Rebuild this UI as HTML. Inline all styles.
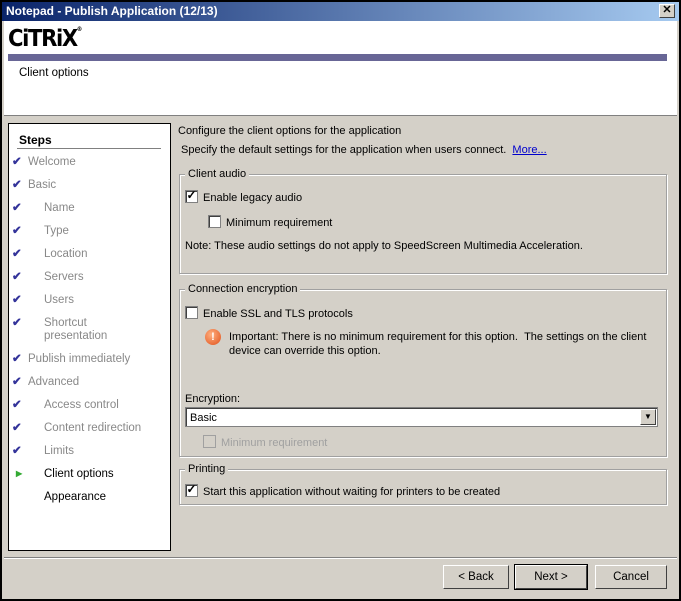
<!DOCTYPE html>
<html><head><style>
*{margin:0;padding:0;box-sizing:border-box}
body{width:681px;height:601px;background:#000;font-family:"Liberation Sans",sans-serif;font-size:11px;color:#000;position:relative;overflow:hidden}
.a{position:absolute;white-space:nowrap}
.t{padding-top:2px}
#win{position:absolute;left:2px;top:2px;width:677px;height:597px;background:#d4d0c8}
#title{position:absolute;left:2px;top:2px;width:677px;height:19px;background:linear-gradient(90deg,#0a246a,#a6caf0);color:#fff;font-weight:bold;font-size:12px;padding:2px 4px}
#close{position:absolute;left:659px;top:4px;width:16px;height:14px;background:#d4d0c8;border:1px solid;border-color:#fff #404040 #404040 #fff;font-size:11px;text-align:center;line-height:11px;font-weight:bold}
#hdr{position:absolute;left:4px;top:21px;width:673px;height:95px;background:#fff;border-bottom:1px solid #808080}
.s{position:absolute;left:12px;color:#888;font-size:11.5px;white-space:nowrap;padding-top:1px}
.s b{color:#33339a;font-weight:bold;position:absolute;left:0;top:-1px}
.gb{position:absolute;border:1px solid #a0a0a0;box-shadow:inset 1px 1px #fff,1px 1px #fff}
.gl{position:absolute;background:#d4d0c8;padding:0 3px;top:-7px;left:5px;white-space:nowrap}
.cb{position:absolute;width:13px;height:13px;background:#fff;border:1px solid #808080;box-shadow:inset 1px 1px #404040}
.btn{position:absolute;top:565px;height:24px;border:1px solid;border-color:#fff #404040 #404040 #fff;text-align:center;line-height:22px;background:#d4d0c8;font-size:11.5px}
</style></head><body>
<div id="win"></div>
<div id="title">Notepad - Publish Application (12/13)</div>
<div id="close">✕</div>
<div id="hdr">
 <div class="a" style="left:4px;top:5px;font-size:23px;font-weight:900;letter-spacing:-1.5px;font-family:'DejaVu Sans',sans-serif;transform:scaleX(0.92);transform-origin:left">CiTRiX<span style="font-size:6px;vertical-align:top">®</span></div>
 <div class="a" style="left:4px;top:33px;width:659px;height:7px;background:#686696"></div>
 <div class="a" style="left:15px;top:46px;font-size:11.5px">Client options</div>
</div>
<div class="a" style="left:8px;top:123px;width:163px;height:428px;background:#fff;border:1px solid #000">
 <div class="a" style="left:10px;top:9px;font-weight:bold;font-size:12px">Steps</div>
 <div class="a" style="left:8px;top:24px;width:144px;height:1px;background:#808080"></div>
</div>
 <div class="s" style="top:155px"><b>✔</b><span style="margin-left:16px">Welcome</span></div>
 <div class="s" style="top:178px"><b>✔</b><span style="margin-left:16px">Basic</span></div>
 <div class="s" style="top:201px"><b>✔</b><span style="margin-left:32px">Name</span></div>
 <div class="s" style="top:224px"><b>✔</b><span style="margin-left:32px">Type</span></div>
 <div class="s" style="top:247px"><b>✔</b><span style="margin-left:32px">Location</span></div>
 <div class="s" style="top:270px"><b>✔</b><span style="margin-left:32px">Servers</span></div>
 <div class="s" style="top:293px"><b>✔</b><span style="margin-left:32px">Users</span></div>
 <div class="s" style="top:316px"><b>✔</b><span style="margin-left:32px;display:inline-block;line-height:13px;vertical-align:top">Shortcut<br>presentation</span></div>
 <div class="s" style="top:352px"><b>✔</b><span style="margin-left:16px">Publish immediately</span></div>
 <div class="s" style="top:375px"><b>✔</b><span style="margin-left:16px">Advanced</span></div>
 <div class="s" style="top:398px"><b>✔</b><span style="margin-left:32px">Access control</span></div>
 <div class="s" style="top:421px"><b>✔</b><span style="margin-left:32px">Content redirection</span></div>
 <div class="s" style="top:444px"><b>✔</b><span style="margin-left:32px">Limits</span></div>
 <div class="s" style="top:467px;color:#000"><b style="color:#3a3;font-size:8px;top:2px;left:4px">▶</b><span style="margin-left:32px">Client options</span></div>
 <div class="s" style="top:490px;color:#000"><span style="margin-left:32px">Appearance</span></div>

<div class="a t" style="left:178px;top:123px">Configure the client options for the application</div>
<div class="a t" style="left:181px;top:142px">Specify the default settings for the application when users connect. &nbsp;<span style="color:#00c;text-decoration:underline">More...</span></div>

<div class="gb" style="left:179px;top:174px;width:488px;height:100px"><span class="gl t" style="padding-top:0">Client audio</span></div>
<div class="cb" style="left:185px;top:190px"></div><div class="a" style="left:185px;top:188px;font-size:12px;font-weight:bold;width:13px;text-align:center">✓</div>
<div class="a t" style="left:203px;top:190px">Enable legacy audio</div>
<div class="cb" style="left:208px;top:215px"></div><div class="a t" style="left:226px;top:215px">Minimum requirement</div>
<div class="a t" style="left:185px;top:238px">Note: These audio settings do not apply to SpeedScreen Multimedia Acceleration.</div>

<div class="gb" style="left:179px;top:289px;width:488px;height:168px"><span class="gl">Connection encryption</span></div>
<div class="cb" style="left:185px;top:306px"></div><div class="a t" style="left:203px;top:306px">Enable SSL and TLS protocols</div>
<div class="a" style="left:205px;top:329px;width:16px;height:16px;border-radius:50%;background:radial-gradient(circle at 40% 35%,#ffb080,#e0501a);color:#fff;font-weight:bold;text-align:center;line-height:16px;font-size:11px">!</div>
<div class="a t" style="left:229px;top:328px;line-height:14px">Important: There is no minimum requirement for this option. &nbsp;The settings on the client<br>device can override this option.</div>
<div class="a t" style="left:185px;top:391px">Encryption:</div>
<div class="a" style="left:185px;top:407px;width:473px;height:20px;background:#fff;border:1px solid #808080;box-shadow:inset 1px 1px #404040;padding:4px 4px">Basic</div>
<div class="a" style="left:640px;top:409px;width:16px;height:16px;border:1px solid;border-color:#fff #404040 #404040 #fff;background:#d4d0c8;font-size:8px;text-align:center;line-height:14px">▼</div>
<div class="cb" style="left:203px;top:435px;background:#d4d0c8;box-shadow:none;border-color:#a0a0a0"></div><div class="a t" style="left:221px;top:435px;color:#a0a0a0">Minimum requirement</div>

<div class="gb" style="left:179px;top:469px;width:488px;height:36px"><span class="gl">Printing</span></div>
<div class="cb" style="left:185px;top:484px"></div><div class="a" style="left:185px;top:482px;font-size:12px;font-weight:bold;width:13px;text-align:center">✓</div>
<div class="a t" style="left:203px;top:484px">Start this application without waiting for printers to be created</div>

<div class="a" style="left:4px;top:557px;width:673px;height:2px;border-top:1px solid #808080;border-bottom:1px solid #fff"></div>
<div class="btn" style="left:443px;width:66px">&lt; Back</div>
<div class="btn" style="left:515px;width:72px;outline:1px solid #000">Next &gt;</div>
<div class="btn" style="left:595px;width:72px">Cancel</div>
</body></html>
